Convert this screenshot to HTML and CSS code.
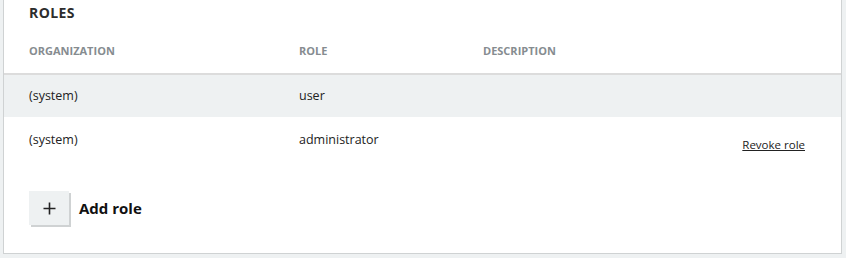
FILE: index.html
```html
<!DOCTYPE html>
<html>
<head>
<meta charset="utf-8">
<link rel="stylesheet" href="styles.css">
</head>
<body>
<section class="card">
  <h2 class="title">ROLES</h2>
  <table class="roles">
    <colgroup>
      <col class="w-org">
      <col class="w-role">
      <col>
      <col class="w-act">
    </colgroup>
    <thead>
      <tr>
        <th>ORGANIZATION</th>
        <th>ROLE</th>
        <th>DESCRIPTION</th>
        <th></th>
      </tr>
    </thead>
    <tbody>
      <tr class="alt">
        <td>(system)</td>
        <td>user</td>
        <td></td>
        <td></td>
      </tr>
      <tr>
        <td>(system)</td>
        <td>administrator</td>
        <td></td>
        <td class="act"><a href="#" class="revoke">Revoke role</a></td>
      </tr>
    </tbody>
  </table>
  <div class="add">
    <button class="add-btn" type="button" aria-label="Add role">
      <svg width="13" height="13" viewBox="0 0 13 13"><path d="M6.5 0.5v12M0.5 6.5h12" stroke="#222" stroke-width="1.6" fill="none"/></svg>
    </button>
    <span class="add-label">Add role</span>
  </div>
</section>
</body>
</html>
```
FILE: styles.css
```css
html, body {
  margin: 0;
  padding: 0;
}
body {
  background: #eef1f2;
  font-family: "Open Sans", Lato, sans-serif;
  color: #222;
  height: 258px;
  overflow: hidden;
}
.card {
  margin: 0 4px 0 3px;
  background: #fff;
  border: 1px solid #cfd2d3;
  border-top: 0;
  height: 254px;
  box-sizing: border-box;
}
.title {
  margin: 0;
  padding: 3px 0 0 25px;
  font-size: 14px;
  font-weight: 700;
  letter-spacing: 0.4px;
  color: #2d2d2d;
  line-height: 20px;
}
.roles {
  width: 100%;
  table-layout: fixed;
  border-collapse: collapse;
  margin-top: 16px;
}
.w-org { width: 270px; }
.w-role { width: 184px; }
.w-act { width: 140px; }
.roles th {
  text-align: left;
  font-size: 11px;
  font-weight: 700;
  color: #868c90;
  padding: 5px 0 0 25px;
  height: 35px;
  line-height: 14px;
  vertical-align: top;
  box-sizing: border-box;
  border-bottom: 2px solid #dcdcdc;
}
.roles td {
  font-size: 12.5px;
  line-height: 16px;
  padding: 0 0 0 25px;
  height: 43px;
  vertical-align: middle;
  color: #222;
  box-sizing: border-box;
}
.roles tbody tr:last-child td {
  vertical-align: top;
  padding-top: 15px;
  height: 46px;
}
.roles tr.alt td {
  background: #eef1f2;
}
.roles tbody tr:last-child td.act {
  text-align: right;
  padding: 20px 36px 0 0;
}
.revoke {
  font-size: 11.5px;
  color: #222;
  text-decoration: underline;
}
.add {
  display: flex;
  align-items: center;
  gap: 10px;
  margin: 28px 0 0 25px;
}
.add-btn {
  width: 40px;
  height: 34px;
  border: 0;
  background: #eef1f2;
  box-shadow: 2px 2px 0 #cfd2d3;
  display: flex;
  align-items: center;
  justify-content: center;
  padding: 0;
}
.add-label {
  font-size: 15px;
  font-weight: 700;
  color: #111;
}
```
